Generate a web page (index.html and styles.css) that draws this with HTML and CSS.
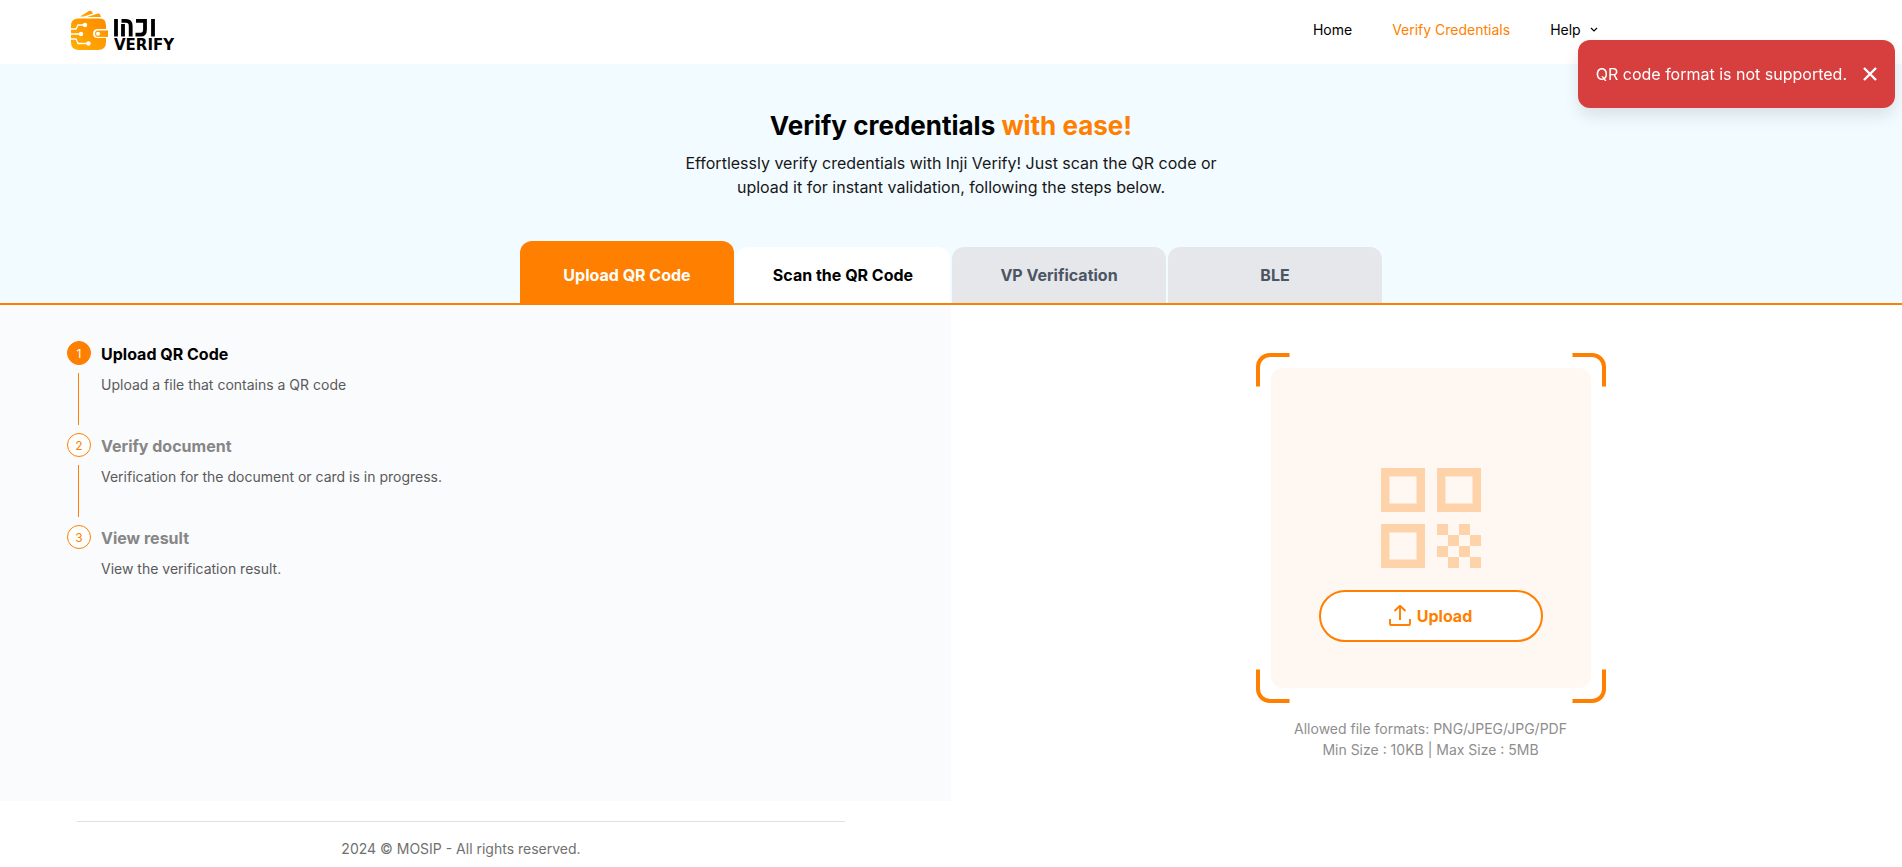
FILE: index.html
```html
<!DOCTYPE html>
<html lang="en">
<head>
<meta charset="utf-8">
<meta name="viewport" content="width=device-width, initial-scale=1">
<title>Inji Verify</title>
<link rel="stylesheet" href="styles.css">
</head>
<body>
<header class="navbar">
  <a class="logo" href="#" aria-label="Inji Verify">
    <svg class="logo-mark" viewBox="0 0 40 42" aria-hidden="true">
      <defs><linearGradient id="wallet" x1="0" y1="1" x2="1" y2="0"><stop offset="0" stop-color="#ffb000"/><stop offset="1" stop-color="#ff8a00"/></linearGradient></defs>
      <path fill="url(#wallet)" d="M10 7.500 19 2q2-1 3 1l1 1.500-9 3zM17 8l11-3.500q2-.500 3 3.500z"/>
      <path fill="url(#wallet)" d="M8 9.500h22q6 0 6 7v3.500H28q-5 0-5 4.500t5 4.500h8v4q0 8-8 8H9q-8 0-8-8V17q0-7.500 7-7.500z"/>
      <path fill="url(#wallet)" d="M28 21.500h10v6.500H28q-3 0-3-3.250t3-3.250z"/>
      <circle cx="28" cy="24.750" r="2" fill="#fff"/>
      <g fill="none" stroke="#fff" stroke-width="1.300"><path d="M1 20h5l2-4h6M1 25h9M1 30h5l2 4.500h9"/></g>
      <g fill="#fff"><circle cx="15" cy="16" r="2.200"/><circle cx="11" cy="25" r="2.200"/><circle cx="18.500" cy="34.500" r="2.200"/></g>
    </svg>
    <svg class="logo-word" viewBox="0 0 66 36" aria-hidden="true">
      <g fill="none" stroke="#000" stroke-width="3.800"><path d="M2 1v17.500M9 18.500V6M7.500 2.900H12q4.700 0 4.700 5v10.600M22 2.900h9v8.500q0 5.200-4.500 5.200h-5M39 1v17.500"/></g>
      <text x="0" y="32" font-family="DejaVu Sans, sans-serif" font-size="15" font-weight="700">VERIFY</text>
    </svg>
  </a>
  <nav class="nav" aria-label="Main">
    <a href="#">Home</a>
    <a class="current" href="#">Verify Credentials</a>
    <button class="help" type="button">Help
      <svg viewBox="0 0 8 6" aria-hidden="true"><path d="M1 1l3 3 3-3" fill="none" stroke="currentColor" stroke-width="1.200"/></svg>
    </button>
  </nav>
</header>
<div class="toast" role="alert">
  <p>QR code format is not supported.</p>
  <button type="button" aria-label="Close"><svg viewBox="0 0 14 14"><path d="M1 1l12 12M13 1L1 13" stroke="currentColor" stroke-width="2.400"/></svg></button>
</div>
<main>
  <section class="hero">
    <h1>Verify credentials <span>with ease!</span></h1>
    <p>Effortlessly verify credentials with Inji Verify! Just scan the QR code or upload it for instant validation, following the steps below.</p>
    <div class="tabs" role="tablist">
      <button class="tab active" role="tab" aria-selected="true" type="button">Upload QR Code</button>
      <button class="tab" role="tab" type="button">Scan the QR Code</button>
      <button class="tab disabled" role="tab" type="button" disabled>VP Verification</button>
      <button class="tab disabled" role="tab" type="button" disabled>BLE</button>
    </div>
  </section>
  <div class="content">
    <ol class="steps">
      <li class="step active"><span class="number">1</span><h2>Upload QR Code</h2><p>Upload a file that contains a QR code</p></li>
      <li class="step"><span class="number">2</span><h2>Verify document</h2><p>Verification for the document or card is in progress.</p></li>
      <li class="step"><span class="number">3</span><h2>View result</h2><p>View the verification result.</p></li>
    </ol>
    <section class="upload">
      <div class="frame">
        <svg class="corners" viewBox="0 0 350 350" aria-hidden="true"><path fill="none" stroke="#ff7f00" stroke-width="4" d="M2 33.500V14A12 12 0 0 1 14 2h19.500M316.500 2H336a12 12 0 0 1 12 12v19.500M348 316.500V336a12 12 0 0 1-12 12h-19.500M33.500 348H14a12 12 0 0 1-12-12v-19.500"/></svg>
        <div class="panel">
          <svg class="qr" viewBox="0 0 100 100" aria-hidden="true">
            <g fill="none" stroke="#ffd3a9" stroke-width="8.500"><path d="M4.250 4.250h35.500v35.500H4.250zM60.250 4.250h35.500v35.500h-35.500zM4.250 60.250h35.500v35.500H4.250z"/></g>
            <path fill="#ffd3a9" d="M56 56h11v11H56zM78 56h11v11H78zM67 67h11v11H67zM89 67h11v11H89zM56 78h11v11H56zM78 78h11v11H78zM67 89h11v11H67zM89 89h11v11H89z"/>
          </svg>
          <button class="upload-button" type="button">
            <svg viewBox="0 0 22 22" aria-hidden="true"><path d="M1 14v5q0 1 1 1h18q1 0 1-1v-5M11 15V1M5.500 6 11 .700 16.500 6" fill="none" stroke="currentColor" stroke-width="1.900"/></svg>
            Upload
          </button>
        </div>
      </div>
      <p>Allowed file formats: PNG/JPEG/JPG/PDF<br>Min Size : 10KB | Max Size : 5MB</p>
    </section>
  </div>
</main>
<footer class="footer"><p>2024 © MOSIP - All rights reserved.</p></footer>
</body>
</html>
```
FILE: styles.css
```css
* { box-sizing: border-box; }
body { margin: 0; background: #fff; color: #000; font-family: Inter, sans-serif; font-size: 14px; }
h1, h2, p, ol { margin: 0; padding: 0; }
button { font: inherit; color: inherit; border: 0; background: none; padding: 0; cursor: pointer; }
a { color: inherit; text-decoration: none; }

.navbar { display: flex; align-items: center; justify-content: space-between; height: 64px; padding: 0 16% 4px 70px; }
.logo { display: flex; align-items: center; gap: 4px; }
.logo-mark { width: 40px; height: 42px; }
.logo-word { width: 66px; height: 36px; margin-top: 12px; }
.nav { display: flex; gap: 40px; line-height: 20px; }
.current { color: #ff7f00; }
.help { display: flex; align-items: center; gap: 9px; }
.help svg { width: 8px; height: 6px; }

.toast { position: fixed; top: 40px; right: 7px; display: flex; align-items: center; gap: 16px; height: 68px; padding: 0 18px; border-radius: 12px; background: #d73e3e; color: #fff; font-size: 16px; box-shadow: 0 8px 16px rgba(0, 0, 0, 0.1); }
.toast svg { display: block; width: 14px; height: 14px; }

.hero { display: flex; flex-direction: column; align-items: center; padding-top: 44px; background: #f2fbff; border-bottom: 2px solid #ff7f00; text-align: center; }
.hero h1 { font-size: 26px; line-height: 36px; font-weight: 700; }
.hero h1 span { color: #ff7f00; }
.hero > p { max-width: 540px; margin-top: 7px; font-size: 16px; line-height: 24px; font-weight: 400; color: #171717; }
.tabs { display: grid; grid-template-columns: repeat(4, 214px); gap: 2px; align-items: end; margin-top: 42px; }
.tab { height: 56px; border-radius: 12px 12px 0 0; background: #fff; font-size: 16px; font-weight: 700; }
.tab.active { height: 62px; padding-top: 6px; background: #ff7f00; color: #fff; }
.tab.disabled { background: #e5e7eb; color: #4b5563; }

.content { display: grid; grid-template-columns: 1fr 1fr; }
.steps { padding: 36px 67px; background: #fafbfd; list-style: none; }
.step { position: relative; display: grid; grid-template-columns: 24px 1fr; column-gap: 10px; row-gap: 8px; height: 92px; align-content: start; }
.step:not(:last-child)::after { content: ""; position: absolute; left: 11px; top: 32px; bottom: 8px; width: 1px; background: #ff7f00; }
.number { display: grid; place-items: center; height: 24px; border: 1px solid #ff7f00; border-radius: 50%; background: #fff; color: #ff7f00; font-size: 12px; }
.active .number { background: #ff7f00; color: #fff; }
.step h2 { font-size: 16px; line-height: 26px; font-weight: 700; color: #868686; }
.step.active h2 { color: #000; }
.step .number { align-self: start; }
.step p { grid-column: 2; line-height: 20px; color: #5a5a5a; }
.upload { display: flex; flex-direction: column; align-items: center; padding: 48px 0 41px 8px; }
.frame { position: relative; padding: 15px; }
.corners { position: absolute; inset: 0; width: 100%; height: 100%; }
.panel { display: flex; flex-direction: column; align-items: center; width: 320px; height: 320px; padding-top: 100px; border-radius: 12px; background: #fff7f2; }
.qr { width: 100px; height: 100px; }
.upload-button { position: relative; display: flex; align-items: center; justify-content: center; gap: 6px; width: 224px; height: 52px; margin-top: 22px; border: 2px solid #ff7f00; border-radius: 26px; background: #fff; color: #ff7f00; font-size: 16px; font-weight: 700; }
.upload-button svg { width: 22px; height: 22px; }
.upload > p { margin-top: 15px; line-height: 21px; text-align: center; color: #8e8e8e; }

.footer { width: 768px; max-width: 90%; margin: 20px 0 0 77px; padding-top: 17px; border-top: 1px solid #e0e0e0; line-height: 20px; text-align: center; color: #707070; }
```
